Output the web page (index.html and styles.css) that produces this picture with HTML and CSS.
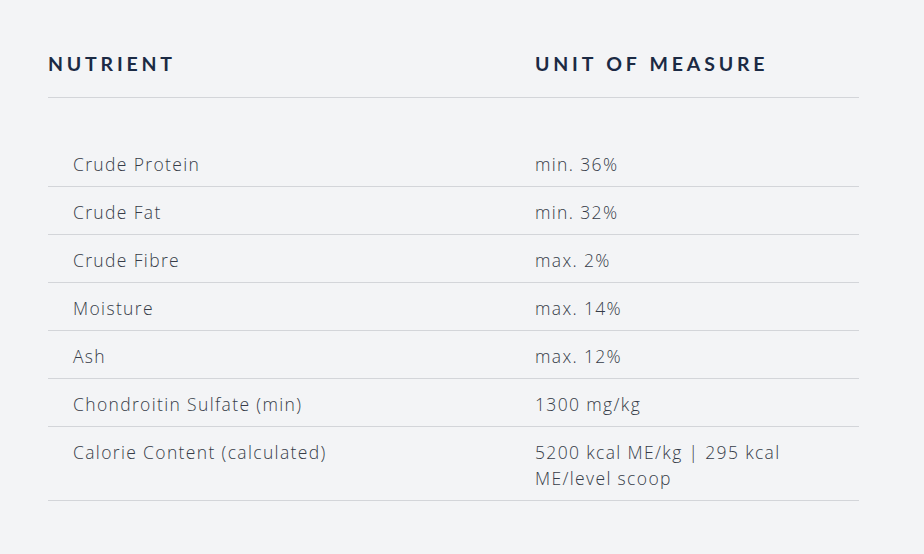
FILE: index.html
```html
<!DOCTYPE html>
<html lang="en">
<head>
<meta charset="utf-8">
<title>Nutrients</title>
<link rel="stylesheet" href="styles.css">
</head>
<body>
<div class="wrap">
  <table class="nt">
    <thead>
      <tr><th class="c1">NUTRIENT</th><th class="c2">UNIT OF MEASURE</th></tr>
    </thead>
    <tbody>
      <tr class="spacer"><td colspan="2"></td></tr>
      <tr><td class="c1">Crude Protein</td><td class="c2">min. 36%</td></tr>
      <tr><td class="c1">Crude Fat</td><td class="c2">min. 32%</td></tr>
      <tr><td class="c1">Crude Fibre</td><td class="c2">max. 2%</td></tr>
      <tr><td class="c1">Moisture</td><td class="c2">max. 14%</td></tr>
      <tr><td class="c1">Ash</td><td class="c2">max. 12%</td></tr>
      <tr><td class="c1">Chondroitin Sulfate (min)</td><td class="c2">1300 mg/kg</td></tr>
      <tr><td class="c1">Calorie Content (calculated)</td><td class="c2">5200 kcal ME/kg | 295 kcal ME/level scoop</td></tr>
    </tbody>
  </table>
</div>
</body>
</html>
```
FILE: styles.css
```css
html, body { margin: 0; padding: 0; background: #f3f4f6; }
body { font-family: "Open Sans", "Noto Sans", sans-serif; }
.wrap { padding: 51px 65px 0 48px; }
.nt { width: 811px; border-collapse: collapse; table-layout: fixed; }
.nt th {
  text-align: left;
  font-family: Lato, "Open Sans", sans-serif;
  font-weight: 700;
  font-size: 19.5px;
  letter-spacing: 3.8px;
  word-spacing: 1px;
  color: #1b2a44;
  line-height: 26px;
  padding: 0 0 20px 0;
  border-bottom: 1px solid #d3d5d9;
}
.nt th.c1 { width: 487px; }
.nt .spacer td { height: 41px; padding: 0; border: none; }
.nt td {
  font-size: 17.5px;
  font-weight: 300;
  letter-spacing: 1.35px;
  color: #363c48;
  line-height: 26px;
  padding: 12px 0 9px 0;
  border-bottom: 1px solid #d3d5d9;
  vertical-align: top;
}
.nt td.c1 { padding-left: 25px; }
.nt td.c2 { padding-right: 70px; }
```
